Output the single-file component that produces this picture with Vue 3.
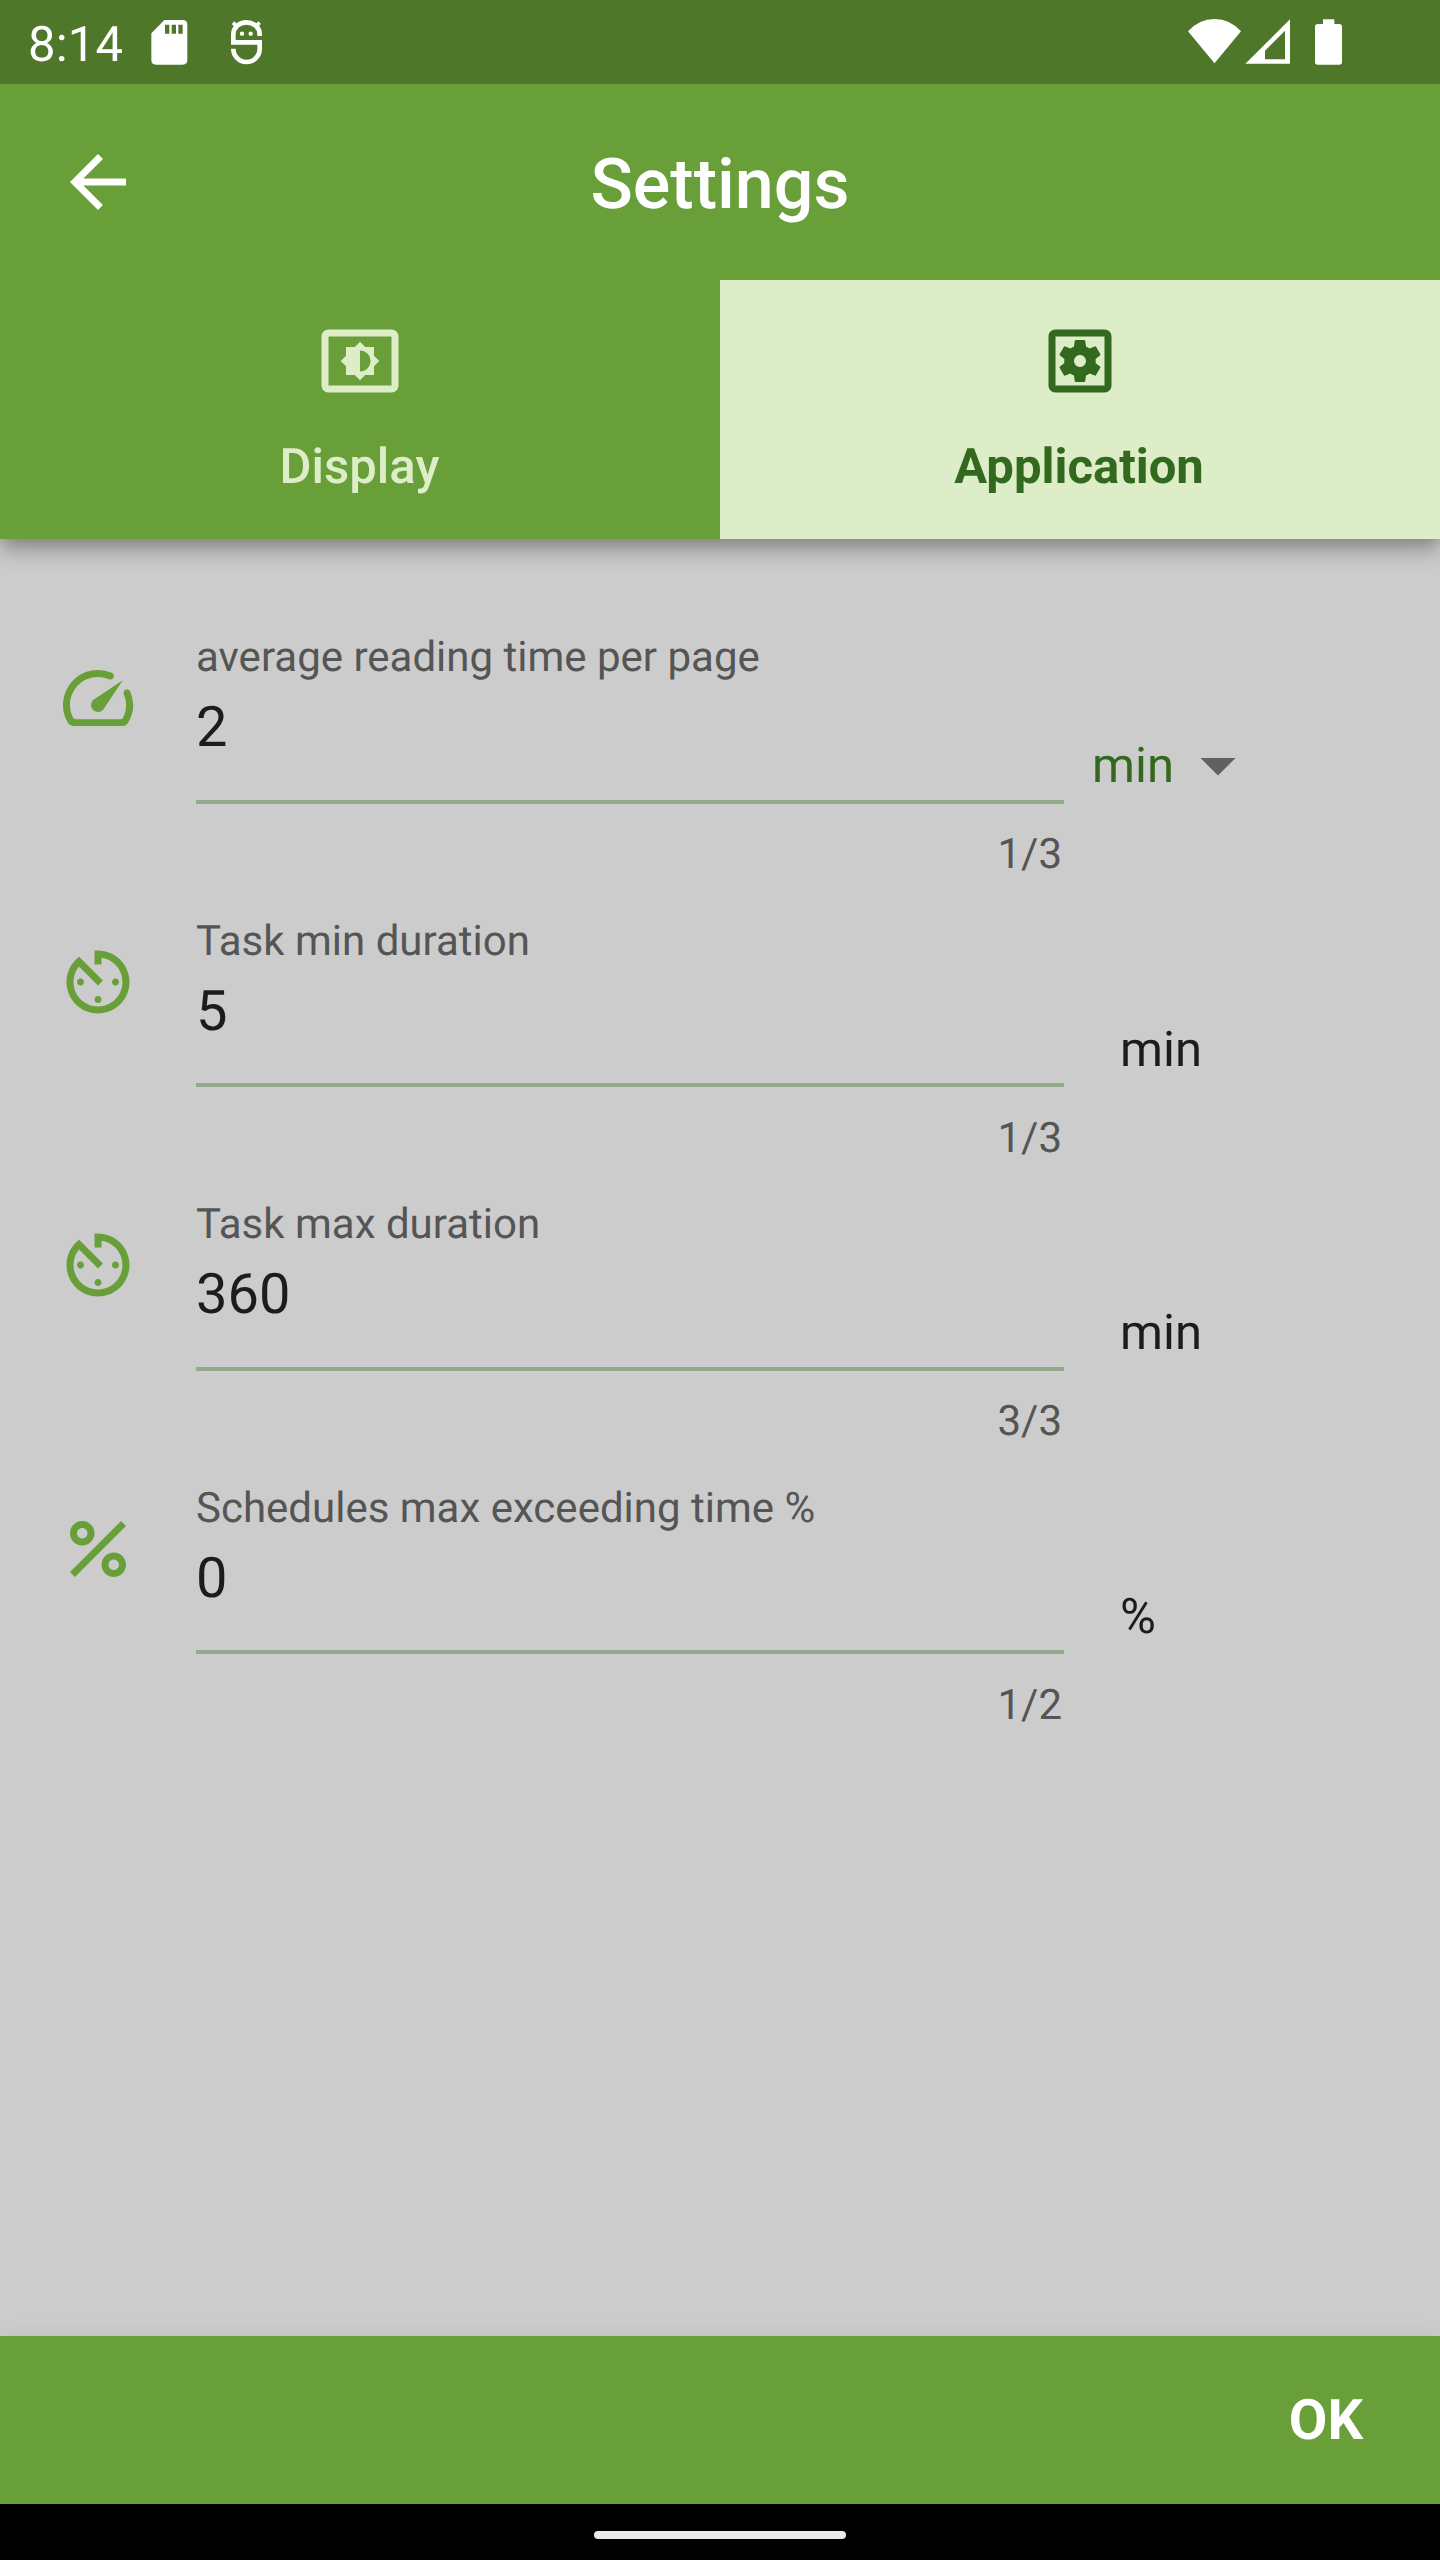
<script setup>
const timerIcon =
  'M11 17c0 .55.45 1 1 1s1-.45 1-1-.45-1-1-1-1 .45-1 1zm0-14v4h2V5.08c3.39.49 6 3.39 6 6.92 0 3.87-3.13 7-7 7s-7-3.13-7-7c0-1.68.59-3.22 1.58-4.42L12 13l1.41-1.41-6.8-6.8v.02C4.42 6.45 3 9.05 3 12c0 4.97 4.02 9 9 9 4.97 0 9-4.03 9-9s-4.03-9-9-9h-1zm7 9c0-.55-.45-1-1-1s-1 .45-1 1 .45 1 1 1 1-.45 1-1zM6 12c0 .55.45 1 1 1s1-.45 1-1-.45-1-1-1-1 .45-1 1z'
const speedIcon =
  'M19.46 10a1 1 0 0 0-.07 1 7.55 7.55 0 0 1 .52 1.81 8 8 0 0 1-.69 4.73 1 1 0 0 1-.89.53H5.68a1 1 0 0 1-.89-.54A8 8 0 0 1 13 6.06a7.69 7.69 0 0 1 2.11.56 1 1 0 0 0 1-.07 1 1 0 0 0-.17-1.76A10 10 0 0 0 3.35 19a2 2 0 0 0 1.72 1h13.85a2 2 0 0 0 1.74-1 10 10 0 0 0 .55-8.89 1 1 0 0 0-1.75-.11z M10.59 12.59a2 2 0 0 0 2.83 2.83l5.66-8.49z'
const percentIcon =
  'M7.5 4C5.57 4 4 5.57 4 7.5S5.57 11 7.5 11 11 9.43 11 7.5 9.43 4 7.5 4zm0 5C6.67 9 6 8.33 6 7.5S6.67 6 7.5 6 9 6.67 9 7.5 8.33 9 7.5 9zM16.5 13c-1.93 0-3.5 1.57-3.5 3.5s1.57 3.5 3.5 3.5 3.5-1.57 3.5-3.5-1.57-3.5-3.5-3.5zm0 5c-.83 0-1.5-.67-1.5-1.5s.67-1.5 1.5-1.5 1.5.67 1.5 1.5-.67 1.5-1.5 1.5zM5.41 20L4 18.59 18.59 4 20 5.41z'

const fields = [
  { label: 'average reading time per page', value: '2', counter: '1/3', unit: 'min', icon: speedIcon, select: true },
  { label: 'Task min duration', value: '5', counter: '1/3', unit: 'min', icon: timerIcon },
  { label: 'Task max duration', value: '360', counter: '3/3', unit: 'min', icon: timerIcon },
  { label: 'Schedules max exceeding time %', value: '0', counter: '1/2', unit: '%', icon: percentIcon },
]
</script>

<template>
  <div class="screen">
    <div class="status">
      <span class="time">8:14</span>
      <svg class="sd" viewBox="453 60 111 135" width="37" height="45">
        <path fill="#fff" fill-rule="evenodd" d="M493 60H548Q562 60 562 74V180Q562 194 548 194H468Q454 194 454 180V100ZM495 74V101H508V74ZM515 74V101H528V74ZM535 74V101H548V74Z" />
      </svg>
      <svg class="bot" viewBox="690 57 99 138" width="33" height="46">
        <g fill="none" stroke="#fff">
          <path stroke-width="14" d="M779 108V103A39.5 36 0 0 0 700 103V127H779V146A39.5 40 0 0 1 700 146" />
          <path stroke-width="11" d="M699 68L712 81M779 68L766 81" />
        </g>
        <circle cx="726" cy="101" r="6.5" fill="#fff" />
        <circle cx="752" cy="101" r="6.5" fill="#fff" />
      </svg>
      <div class="signals">
        <svg viewBox="141 57 165 138" width="55" height="46">
          <path fill="#fff" d="M144 94Q177 57 223.500 57T303 94L223.500 190Z" />
        </svg>
        <svg class="cell" viewBox="315 57 138 138" width="46" height="46">
          <path fill="#fff" fill-rule="evenodd" d="M450 58V191H316ZM435 92L375 152V178H435Z" />
        </svg>
        <svg class="battery" viewBox="522 57 87 138" width="29" height="46">
          <path fill="#fff" d="M549 58H583V72H598Q606 72 606 80V186Q606 194 598 194H533Q525 194 525 186V80Q525 72 533 72H549Z" />
        </svg>
      </div>
    </div>

    <header class="top">
      <div class="appbar">
        <svg class="back" viewBox="0 0 24 24" width="84" height="84">
          <path fill="#fff" d="M20 11H7.830l5.590-5.590L12 4l-8 8 8 8 1.410-1.410L7.830 13H20v-2z" />
        </svg>
        <h1>Settings</h1>
      </div>
      <nav class="tabs">
        <div class="tab">
          <svg viewBox="0 0 24 24" width="84" height="84">
            <path fill="currentColor" d="M21 3H3c-1.100 0-2 .9-2 2v14c0 1.100.9 2 2 2h18c1.100 0 2-.9 2-2V5c0-1.100-.9-2-2-2zm0 16.010H3V4.990h18v14.020zM8 16h2.500l1.500 1.500 1.500-1.500H16v-2.500l1.500-1.500-1.500-1.500V8h-2.500L12 6.500 10.500 8H8v2.500L6.500 12 8 13.500V16zm4-7c1.660 0 3 1.340 3 3s-1.340 3-3 3V9z" />
          </svg>
          <span>Display</span>
        </div>
        <div class="tab active">
          <svg viewBox="0 0 24 24" width="84" height="84">
            <path fill="currentColor" fill-rule="evenodd" d="M19 3H5c-1.110 0-2 .9-2 2v14c0 1.100.89 2 2 2h14c1.110 0 2-.9 2-2V5c0-1.100-.89-2-2-2zm0 16H5V5h14v14z" />
            <path fill="currentColor" fill-rule="evenodd" d="M6.210 13.970l1.200 2.070c.08.13.23.18.37.13l1.490-.6c.31.24.64.44 1.010.59l.22 1.590c.03.14.15.25.3.25h2.400c.15 0 .27-.11.3-.26l.22-1.590c.36-.15.7-.35 1.010-.59l1.490.6c.14.05.29 0 .37-.13l1.200-2.070c.08-.13.04-.29-.07-.39l-1.270-.99c.03-.19.04-.39.04-.58 0-.2-.02-.39-.04-.59l1.270-.99c.11-.09.15-.26.07-.39l-1.200-2.070c-.08-.13-.23-.18-.37-.13l-1.490.6c-.31-.24-.64-.44-1.010-.59l-.22-1.590c-.03-.14-.15-.25-.3-.25h-2.400c-.15 0-.27.11-.3.26l-.22 1.590c-.36.15-.71.34-1.010.58l-1.490-.6c-.14-.05-.29 0-.37.13l-1.200 2.070c-.08.13-.04.29.07.39l1.270.99c-.03.2-.05.39-.05.59 0 .2.02.39.04.59l-1.270.99c-.11.1-.14.26-.06.39zM12 10.290c.94 0 1.710.77 1.710 1.710s-.77 1.710-1.710 1.710-1.710-.77-1.710-1.710.77-1.710 1.710-1.710z" />
          </svg>
          <span>Application</span>
        </div>
      </nav>
    </header>

    <main class="form">
      <div v-for="f in fields" :key="f.label" class="row">
        <svg class="icon" viewBox="0 0 24 24" width="84" height="84">
          <path fill="#689f38" :d="f.icon" />
        </svg>
        <div class="field">
          <div class="label">{{ f.label }}</div>
          <div class="value">{{ f.value }}</div>
          <div class="underline"></div>
          <div class="counter">{{ f.counter }}</div>
        </div>
        <div class="unit" :class="{ select: f.select }">
          <span>{{ f.unit }}</span>
          <svg v-if="f.select" class="caret" viewBox="0 0 24 24" width="84" height="84">
            <path fill="#616161" d="M7 10l5 5 5-5z" />
          </svg>
        </div>
      </div>
    </main>

    <footer class="actions"><span class="ok">OK</span></footer>
    <div class="navbar"><div class="pill"></div></div>
  </div>
</template>

<style>
body {
  margin: 0;
}
</style>

<style scoped>
.screen {
  width: 1440px;
  height: 2560px;
  display: flex;
  flex-direction: column;
  overflow: hidden;
  background: #ccc;
  font-family: Roboto, sans-serif;
  text-rendering: geometricPrecision;
}
svg {
  display: block;
  flex: none;
}
.status {
  height: 84px;
  flex: none;
  z-index: 2;
  display: flex;
  align-items: flex-start;
  background: #4f772a;
  color: #fff;
}
.time {
  width: 123px;
  padding: 16px 0 0 28px;
  font-size: 49px;
  line-height: 58px;
  letter-spacing: 0.2px;
  white-space: nowrap;
}
.sd {
  margin-top: 20px;
}
.bot {
  margin: 19px 0 0 42px;
}
.signals {
  display: flex;
  margin: 19px 97px 0 auto;
}
.cell {
  margin-left: 3px;
}
.battery {
  margin-left: 23px;
}
.top {
  flex: none;
  z-index: 1;
  background: #689f38;
  box-shadow: 0 7px 14px -3.5px rgba(0, 0, 0, 0.2), 0 14px 17.5px 0 rgba(0, 0, 0, 0.14), 0 3.5px 35px 0 rgba(0, 0, 0, 0.12);
}
.appbar {
  height: 196px;
  display: grid;
  grid-template-columns: 140px 1fr 140px;
  align-items: center;
}
.back {
  margin-left: 56px;
}
h1 {
  margin: 6px 0 0;
  color: #fff;
  text-align: center;
  font-size: 70px;
  font-weight: 500;
  line-height: 82px;
}
.tabs {
  display: flex;
  height: 259px;
}
.tab {
  flex: 1;
  display: flex;
  flex-direction: column;
  align-items: center;
  padding-top: 39px;
  color: #dcedc8;
  font-size: 49px;
  font-weight: 500;
  line-height: 58px;
}
.tab span {
  margin: 35px 1px 0 0;
}
.tab.active {
  background: #dcedc8;
  color: #33691e;
  font-weight: 700;
}
.tab.active span {
  margin-right: 2px;
}
.form {
  flex: 1;
  padding-top: 61px;
}
.row {
  display: flex;
  height: 283.5px;
}
.icon {
  margin: 56.4px 56px 0;
}
.field {
  width: 868px;
  padding-top: 33px;
}
.label {
  color: #555;
  font-size: 42px;
  line-height: 50px;
}
.value {
  margin-top: 11px;
  color: #1c1c1c;
  font-size: 56px;
  line-height: 66px;
}
.underline {
  height: 4px;
  margin-top: 39.5px;
  background: #93a98b;
}
.counter {
  margin: 26.5px 2px 0 0;
  color: #555;
  text-align: right;
  font-size: 42px;
  line-height: 50px;
}
.unit {
  display: flex;
  align-items: center;
  height: 58px;
  margin: 137px 0 0 56px;
  color: #1c1c1c;
  font-size: 49px;
  line-height: 58px;
}
.unit.select {
  margin-left: 28px;
  color: #33691e;
}
.caret {
  margin: -2px 0 0 2px;
}
.actions {
  flex: none;
  height: 168px;
  display: flex;
  justify-content: flex-end;
  align-items: center;
  padding-right: 77px;
  box-sizing: border-box;
  background: #689f38;
  box-shadow: 0 3.5px 24px 0 rgba(0, 0, 0, 0.09);
}
.ok {
  color: #fff;
  font-size: 56px;
  font-weight: 700;
  line-height: 66px;
}
.navbar {
  flex: none;
  z-index: 1;
  height: 56px;
  display: flex;
  justify-content: center;
  background: #000;
}
.pill {
  width: 252px;
  height: 8px;
  margin-top: 27px;
  border-radius: 4px;
  background: #ebebeb;
}
</style>
